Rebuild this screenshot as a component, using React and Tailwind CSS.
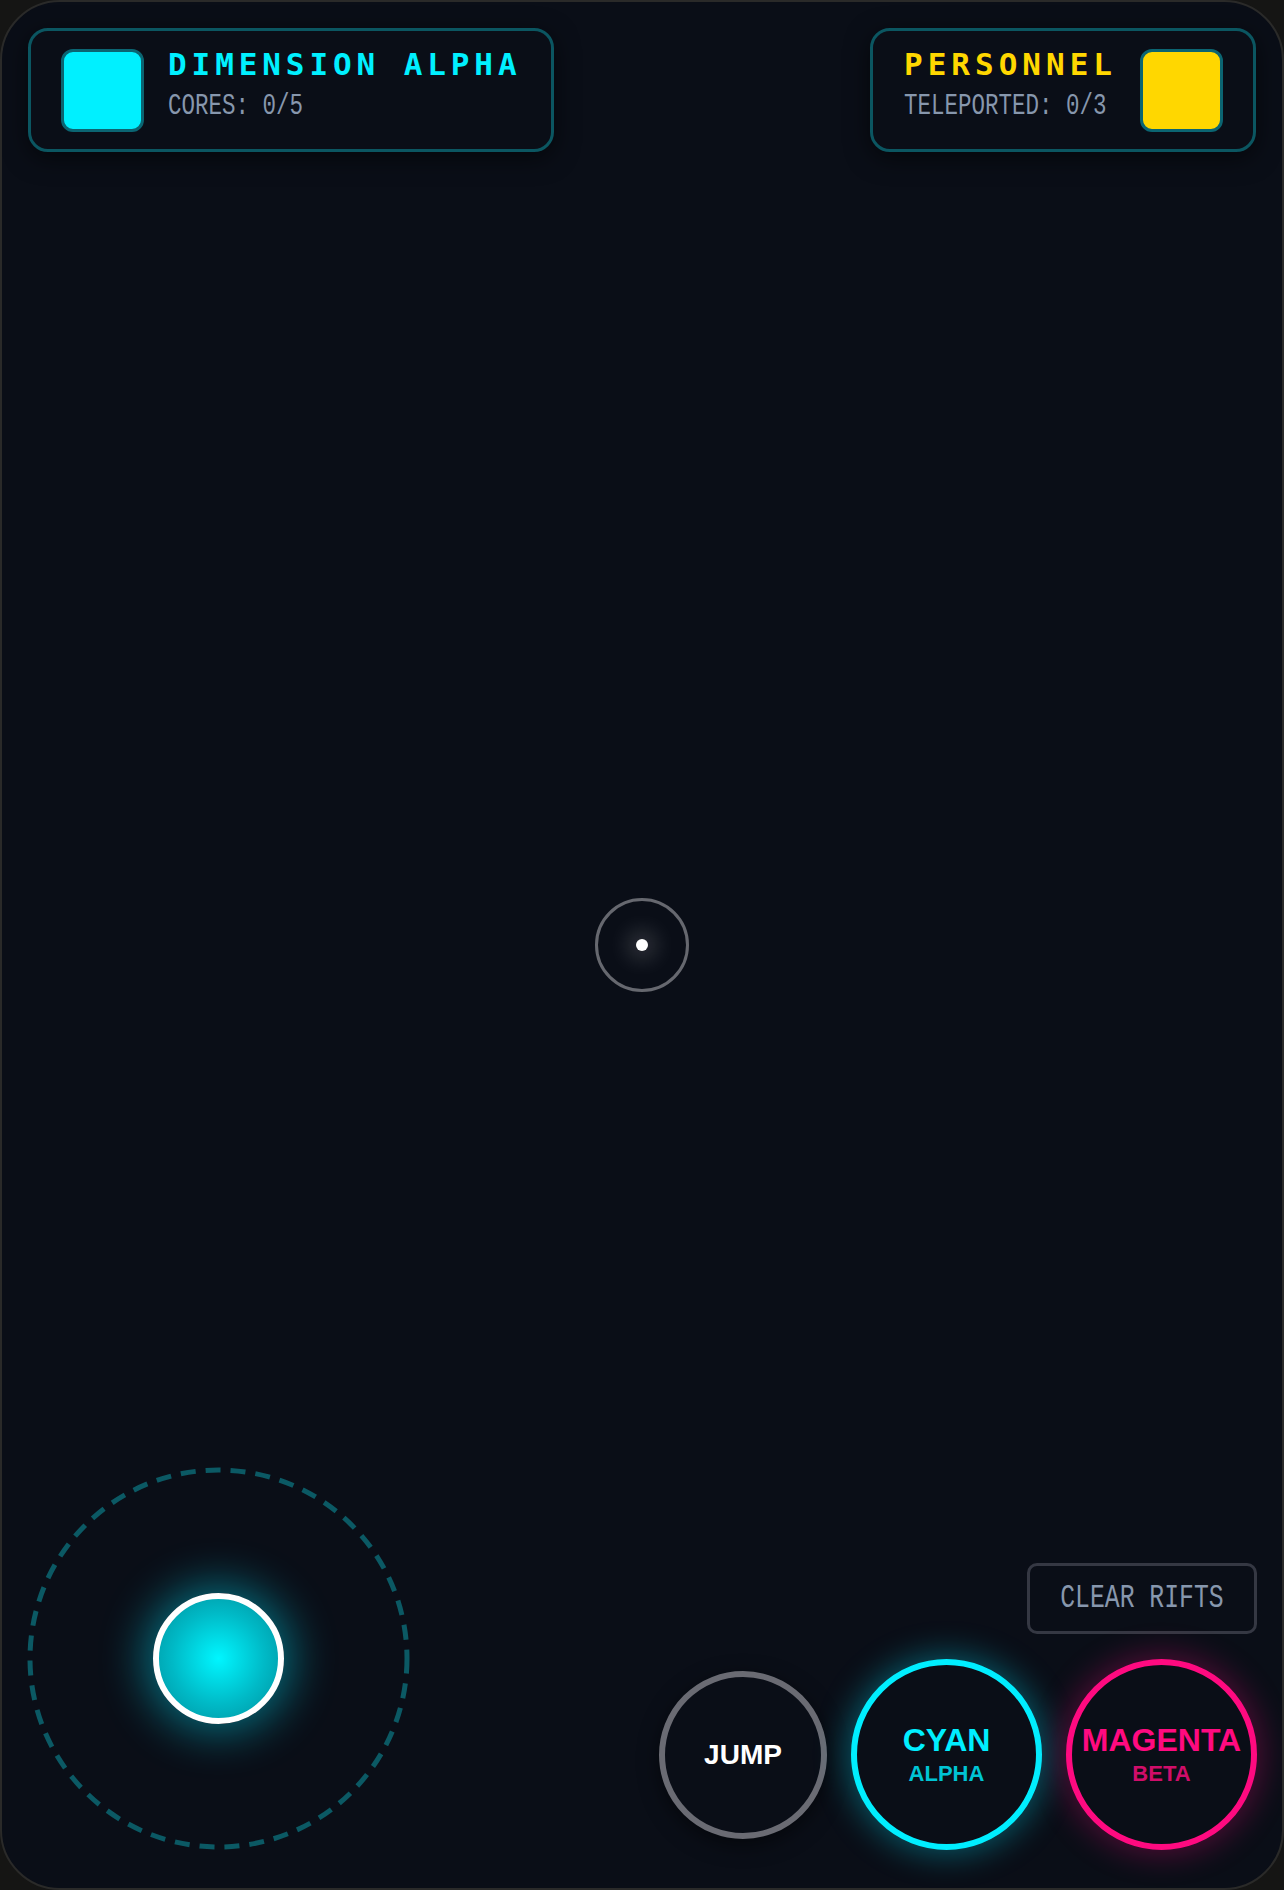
import React from "react";

const mono = { fontFamily: '"Liberation Mono", "DejaVu Sans Mono", monospace' };
const monoBold = { fontFamily: '"DejaVu Sans Mono", "Liberation Mono", monospace' };
const sans = { fontFamily: '"Liberation Sans", Arial, sans-serif' };

function Joystick() {
  return (
    <div className="grid w-[383px] h-[383px] place-items-center">
      <svg className="[grid-area:1/1] w-[383px] h-[383px]" viewBox="0 0 383 383">
        <circle cx="191.5" cy="191.5" r="188.5" fill="none" stroke="#0b5964" strokeWidth="5" strokeDasharray="15 10" />
      </svg>
      <div className="[grid-area:1/1] w-[131px] h-[131px] rounded-full border-[6px] border-white bg-[radial-gradient(circle,#00f6ff_0%,#00b9c6_55%,#008f9b_100%)] shadow-[0_0_45px_8px_rgba(0,230,255,0.45)]" />
    </div>
  );
}

export default function App() {
  return (
    <div className="w-[1284px] h-[1890px] bg-[#151514]">
      <div className="relative h-full rounded-[60px] border-2 border-[#2a2a29] bg-[#0a0e17] overflow-hidden flex flex-col">
        {/* header */}
        <div className="flex justify-between px-[26px] pt-[26px]">
          <div className="flex items-center gap-6 w-[526px] h-[124px] pl-[30px] border-[3px] border-[#0b5661] rounded-[20px] bg-[#0a0e17] shadow-[0_6px_24px_rgba(0,0,0,0.55)]">
            <div className="w-[83px] h-[83px] shrink-0 rounded-[12px] border-[3px] border-[#0b6572] bg-[#00f0ff]" />
            <div className="flex flex-col pb-[10px] whitespace-nowrap">
              <div className="text-[31px] leading-none font-bold tracking-[4.9px] text-[#00f0ff]" style={monoBold}>
                DIMENSION ALPHA
              </div>
              <div className="mt-[11px] text-[30px] leading-none text-[#8797ad]" style={mono}>
                <span className="inline-block origin-left scale-x-75">CORES: 0/5</span>
              </div>
            </div>
          </div>

          <div className="flex items-center justify-between w-[386px] h-[124px] pl-[31px] pr-[30px] border-[3px] border-[#0b5661] rounded-[20px] bg-[#0a0e17] shadow-[0_6px_24px_rgba(0,0,0,0.55)]">
            <div className="flex flex-col pb-[10px] whitespace-nowrap w-[212px]">
              <div className="text-[31px] leading-none font-bold tracking-[5px] text-[#ffd700]" style={monoBold}>
                PERSONNEL
              </div>
              <div className="mt-[11px] text-[30px] leading-none text-[#8797ad]" style={mono}>
                <span className="inline-block origin-left scale-x-75">TELEPORTED: 0/3</span>
              </div>
            </div>
            <div className="w-[83px] h-[83px] shrink-0 rounded-[12px] border-[3px] border-[#0b6572] bg-[#ffd700]" />
          </div>
        </div>

        <div className="flex-1" />

        {/* bottom controls */}
        <div className="flex justify-between items-end px-[25px] pb-[38px]">
          <Joystick />
          <div className="flex flex-col items-end gap-[25px]">
            <button className="w-[230px] h-[71px] rounded-[10px] border-[3px] border-[#353843] bg-transparent flex items-center justify-center overflow-visible">
              <span className="inline-block whitespace-nowrap scale-x-75 text-[33px] leading-none text-[#8797ad]" style={mono}>
                CLEAR RIFTS
              </span>
            </button>
            <div className="flex items-center gap-6">
              <button className="w-[168px] h-[168px] rounded-full border-[6px] border-[#6a6b73] bg-[#0a0e17] flex items-center justify-center shadow-[0_6px_20px_rgba(0,0,0,0.5)]">
                <span className="text-[28px] leading-none font-bold text-white" style={sans}>JUMP</span>
              </button>
              <button className="w-[191px] h-[191px] rounded-full border-[6px] border-[#00eeff] bg-[#0a0e17] flex flex-col items-center justify-center shadow-[0_0_32px_4px_rgba(0,230,255,0.35)]">
                <span className="mb-[7px] text-[32px] leading-none font-bold text-[#00eeff]" style={sans}>CYAN</span>
                <span className="text-[22px] leading-none font-bold text-[#00c4d4]" style={sans}>ALPHA</span>
              </button>
              <button className="w-[191px] h-[191px] rounded-full border-[6px] border-[#ff0a80] bg-[#0a0e17] flex flex-col items-center justify-center shadow-[0_0_32px_4px_rgba(255,10,128,0.3)]">
                <span className="mb-[7px] text-[32px] leading-none font-bold text-[#ff0a80] whitespace-nowrap" style={sans}>MAGENTA</span>
                <span className="text-[22px] leading-none font-bold text-[#d00d6a]" style={sans}>BETA</span>
              </button>
            </div>
          </div>
        </div>

        {/* center reticle */}
        <div className="absolute left-1/2 top-1/2 -translate-x-1/2 -translate-y-1/2 w-[94px] h-[94px] rounded-full border-[3px] border-[#66686f] flex items-center justify-center">
          <div className="w-3 h-3 rounded-full bg-white shadow-[0_0_22px_8px_rgba(255,255,255,0.18)]" />
        </div>
      </div>
    </div>
  );
}
